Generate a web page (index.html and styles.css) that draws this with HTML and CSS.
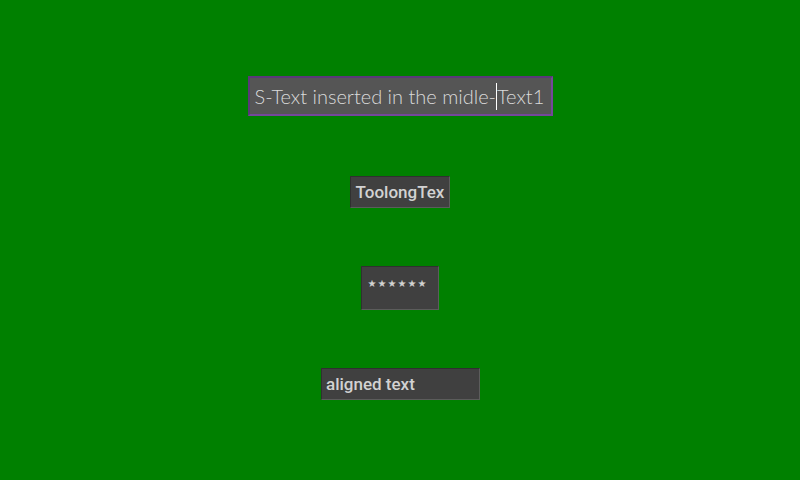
FILE: index.html
```html
<!DOCTYPE html>
<html>
<head>
<meta charset="utf-8">
<link rel="stylesheet" href="styles.css">
</head>
<body>
<div class="screen">
  <div class="field field-main"><span>S-Text inserted in the midle-</span><span class="caret"></span><span>Text1</span></div>
  <div class="field field-short">ToolongTex</div>
  <div class="field field-pass"><span class="star">★</span><span class="star">★</span><span class="star">★</span><span class="star">★</span><span class="star">★</span><span class="star">★</span></div>
  <div class="field field-left">aligned text</div>
</div>
</body>
</html>
```
FILE: styles.css
```css
html, body {
  margin: 0;
  padding: 0;
  background: #008000;
}
.screen {
  width: 800px;
  height: 480px;
  display: flex;
  flex-direction: column;
  align-items: center;
  padding-top: 76px;
  box-sizing: border-box;
}
.field {
  box-sizing: border-box;
  background: #404040;
  border: 1px solid;
  border-color: #303030 #5c5c5c #5c5c5c #303030;
  color: #d2d2d2;
  font-family: Roboto, "Liberation Sans", sans-serif;
  font-weight: 500;
  font-size: 17px;
  white-space: nowrap;
  overflow: hidden;
}
.field-main {
  width: 305px;
  height: 40px;
  border-width: 2px;
  border-color: #5a3878 #74479a #74479a #5a3878;
  background: #555555;
  font-family: Lato, "Open Sans", sans-serif;
  font-weight: 300;
  font-size: 20px;
  line-height: 36px;
  padding-left: 5px;
  display: flex;
  align-items: center;
  color: #dadada;
}
.caret {
  display: inline-block;
  flex: none;
  width: 1px;
  height: 27px;
  background: #ffffff;
  margin-top: 1px;
}
.field-short {
  width: 100px;
  height: 32px;
  line-height: 30px;
  text-align: center;
  margin-top: 60px;
}
.field-pass {
  width: 78px;
  height: 44px;
  margin-top: 58px;
  display: flex;
  padding: 10px 0 0 5px;
}
.star {
  display: inline-block;
  width: 10px;
  height: 14px;
  text-align: center;
  font-family: "DejaVu Sans", sans-serif;
  font-weight: normal;
  font-size: 10px;
  line-height: 14px;
}
.field-left {
  width: 159px;
  height: 32px;
  line-height: 30px;
  padding-left: 4px;
  margin-top: 58px;
  margin-left: 1px;
}
```
